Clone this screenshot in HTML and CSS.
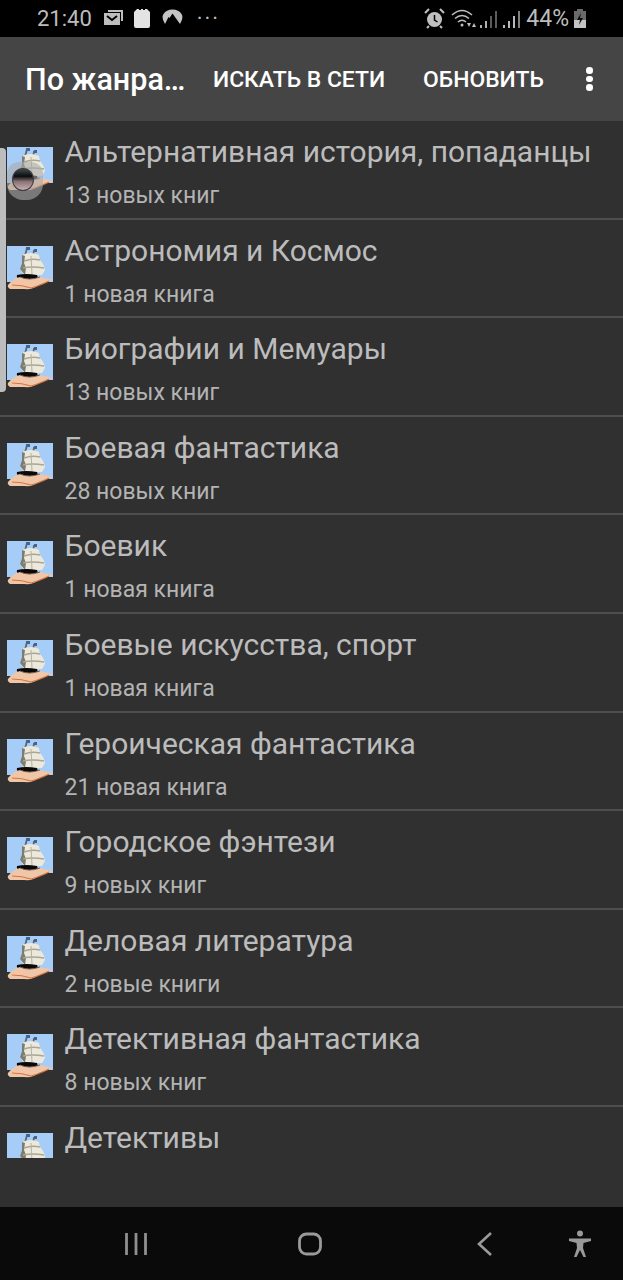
FILE: index.html
```html
<!DOCTYPE html>
<html lang="ru">
<head>
<meta charset="utf-8">
<title>По жанрам</title>
<link rel="stylesheet" href="styles.css">
</head>
<body>
<svg class="defs" width="0" height="0">
  <symbol id="ship" viewBox="0 0 46 44">
    <rect x="0" y="0" width="46" height="36" fill="#a5cdf7"/>
    <path d="M20 2l-2 8M27 4l-1 8" stroke="#5b6672" stroke-width="1.800"/>
    <path d="M19 1h4v3h-4zM27 3h3v3h-3z" fill="#47658c"/>
    <path d="M15 9q9-4 17 0l1 5q4 4 5 10l-3 5H17l-4-6 2-6z" fill="#ece9dc"/>
    <path d="M15 9l3 1-1 7 2 5-1 7-5-6 2-6z" fill="#7d7c72"/>
    <path d="M17 15q8-3 16-1M16 22q9-2 21 0" fill="none" stroke="#a9a694" stroke-width="1.400"/>
    <path d="M24 10l1 18" fill="none" stroke="#b5b2a0" stroke-width="1"/>
    <path d="M10 29q9-2 20 0l1 3q-9 2-18 1q-4-1-3-4z" fill="#090909"/>
    <path d="M1 39q6-7 12-8q9 4 20 0l13 3-14 5q-6 5-15 4l-14 0q-3-2-2-4z" fill="#f0c6a8"/>
    <path d="M5 39q10 0 19 3q8-2 18-7" fill="none" stroke="#d9763f" stroke-width="1.200"/>
    <path d="M13 31q9 4 20 0" fill="none" stroke="#7c5a4a" stroke-width="1"/>
  </symbol>
</svg>
<div class="screen">
  <div class="status">
    <div class="status-left">
      <span class="clock">21:40</span>
      <svg class="ico ico-mail" width="19" height="16" viewBox="0 0 19 16"><path d="M4 0h15v11h-2V2H4z" fill="#bdbdbd"/><path d="M0 3h16v12H0z" fill="#bdbdbd"/><path d="M3 6l5 4 5-4" fill="none" stroke="#000" stroke-width="2"/></svg>
      <svg class="ico ico-clip" width="17" height="21" viewBox="0 0 17 21"><path d="M3 1h2v1h2V1h2v1h2V1h2l3 3v14q0 2-2 2H2q-2 0-2-2V4z" fill="#e3e3e3"/></svg>
      <svg class="ico ico-vpn" width="21" height="16" viewBox="0 0 21 16"><path d="M3 16Q-1 10 1.500 6A10 8 0 0 1 19.500 6Q22 10 18 16L10.500 5.500 7.500 10 6.500 9z" fill="#c4c4c4"/></svg>
      <span class="more-dots">···</span>
    </div>
    <div class="status-right">
      <svg class="ico ico-alarm" width="21" height="21" viewBox="0 0 21 21"><circle cx="10.500" cy="11.500" r="7.500" fill="#c0c0c0"/><path d="M10.500 7v5l3 2" fill="none" stroke="#000" stroke-width="1.500"/><path d="M1 5l4-4M20 5l-4-4M5 18l-2 2M16 18l2 2" stroke="#c0c0c0" stroke-width="2"/></svg>
      <svg class="ico ico-wifi" width="26" height="20" viewBox="0 0 26 20"><path d="M1 6q10-9 20 0M4 9.500q7-6 14 0M7 13q4-3.500 8 0" fill="none" stroke="#bdbdbd" stroke-width="1.600"/><path d="M16 14h4l-2 4zM21 18h4l-2-4z" fill="#bdbdbd"/><circle cx="11" cy="16" r="1.500" fill="#bdbdbd"/></svg>
      <svg class="ico ico-sig" width="20" height="20" viewBox="0 0 20 20"><path d="M1 16h2v3H1zM6 12h2v7H6z" fill="#b0b0b0"/><path d="M11 7h2v12h-2zM16 2h2v17h-2z" fill="#5c5c5c"/></svg>
      <svg class="ico ico-sig" width="20" height="20" viewBox="0 0 20 20"><path d="M1 16h2v3H1zM6 12h2v7H6zM11 7h2v12h-2z" fill="#b8b8b8"/><path d="M16 2h2v17h-2z" fill="#808080"/></svg>
      <span class="percent">44%</span>
      <svg class="ico" width="14" height="21" viewBox="0 0 14 21"><path d="M4 1h6v2h3v17H1V3h3z" fill="#6a6a6a"/><path d="M1 12h12v8H1z" fill="#c4c4c4"/><path d="M8 5l-4 7h3l-1 5 4-7H7z" fill="#0c0c0c"/></svg>
    </div>
  </div>
  <header class="appbar">
    <h1 class="title">По жанра…</h1>
    <span class="action action-search">ИСКАТЬ В СЕТИ</span>
    <span class="action action-refresh">ОБНОВИТЬ</span>
    <span class="overflow"><i></i><i></i><i></i></span>
  </header>
  <main class="list">
    <div class="row"><svg class="thumb"><use href="#ship"/></svg><div class="text"><div class="name">Альтернативная история, попаданцы</div><div class="count">13 новых книг</div></div></div>
    <div class="row"><svg class="thumb"><use href="#ship"/></svg><div class="text"><div class="name">Астрономия и Космос</div><div class="count">1 новая книга</div></div></div>
    <div class="row"><svg class="thumb"><use href="#ship"/></svg><div class="text"><div class="name">Биографии и Мемуары</div><div class="count">13 новых книг</div></div></div>
    <div class="row"><svg class="thumb"><use href="#ship"/></svg><div class="text"><div class="name">Боевая фантастика</div><div class="count">28 новых книг</div></div></div>
    <div class="row"><svg class="thumb"><use href="#ship"/></svg><div class="text"><div class="name">Боевик</div><div class="count">1 новая книга</div></div></div>
    <div class="row"><svg class="thumb"><use href="#ship"/></svg><div class="text"><div class="name">Боевые искусства, спорт</div><div class="count">1 новая книга</div></div></div>
    <div class="row"><svg class="thumb"><use href="#ship"/></svg><div class="text"><div class="name">Героическая фантастика</div><div class="count">21 новая книга</div></div></div>
    <div class="row"><svg class="thumb"><use href="#ship"/></svg><div class="text"><div class="name">Городское фэнтези</div><div class="count">9 новых книг</div></div></div>
    <div class="row"><svg class="thumb"><use href="#ship"/></svg><div class="text"><div class="name">Деловая литература</div><div class="count">2 новые книги</div></div></div>
    <div class="row"><svg class="thumb"><use href="#ship"/></svg><div class="text"><div class="name">Детективная фантастика</div><div class="count">8 новых книг</div></div></div>
    <div class="row row-last"><svg class="thumb thumb-cut" viewBox="0 0 46 25" preserveAspectRatio="xMidYMin slice"><use href="#ship" width="46" height="44"/></svg><div class="text"><div class="name">Детективы</div></div></div>
  </main>
  <nav class="navbar">
    <svg class="nav-recents" width="22" height="22" viewBox="0 0 22 22"><path d="M1.500 0v22M11 0v22M20.500 0v22" stroke="#8f8f8f" stroke-width="2.800"/></svg>
    <svg class="nav-home" width="26" height="26" viewBox="0 0 26 26"><rect x="2.500" y="3" width="21" height="20" rx="7" fill="none" stroke="#9a9a9a" stroke-width="2.800"/></svg>
    <svg class="nav-back" width="18" height="26" viewBox="0 0 18 26"><path d="M15 2L3 13l12 11" fill="none" stroke="#9a9a9a" stroke-width="2.600"/></svg>
    <svg class="nav-access" width="24" height="28" viewBox="0 0 24 28"><circle cx="12" cy="3.500" r="3" fill="#9a9a9a"/><path d="M1 8.500h22v2.500l-7.500 2-.5 5 3 9h-2.500L12 20l-3.500 7H6l3-9-.5-5L1 11z" fill="#9a9a9a"/></svg>
  </nav>
  <div class="edge-handle"></div>
  <div class="edge-bubble"></div>
  <div class="edge-lens"></div>
</div>
</body>
</html>
```

FILE: styles.css
```css
* { box-sizing: border-box; }
html, body { margin: 0; padding: 0; }
body { background: #000; font-family: Roboto, "Noto Sans", sans-serif; }
.defs { position: absolute; }
.screen { position: relative; width: 623px; height: 1280px; overflow: hidden; display: flex; flex-direction: column; background: #303030; }

.status { height: 37px; flex: none; background: #000; display: flex; justify-content: space-between; align-items: center; padding: 0 36px 0 37px; color: #bdbdbd; }
.status-left, .status-right { display: flex; align-items: center; }
.clock { font-size: 22px; margin-right: 12px; }
.ico { flex: none; display: block; }
.ico-mail { margin-top: -2px; margin-right: 11px; }
.ico-clip { margin-top: -1px; margin-right: 11px; }
.ico-vpn { margin-top: -6px; margin-right: 14px; }
.more-dots { font-size: 22px; letter-spacing: 2px; margin-top: -1px; }
.ico-alarm { margin-right: 6px; }
.ico-wifi { margin-right: 2px; }
.ico-sig { margin-right: 3px; }
.percent { font-size: 23px; margin: 0 4px 0 1px; }

.appbar { height: 84px; flex: none; background: #454545; display: flex; align-items: center; padding: 0 0 0 25px; color: #fff; }
.title { margin: 0; width: 188px; font-size: 30.500px; font-weight: 500; white-space: nowrap; }
.action { font-size: 22.900px; font-weight: 500; white-space: nowrap; }
.action-search { width: 210px; }
.action-refresh { width: 155px; }
.overflow { display: flex; flex-direction: column; gap: 2px; margin-left: 8px; }
.overflow i { display: block; width: 6.500px; height: 6.500px; border-radius: 50%; background: #fff; }

.list { flex: 1; min-height: 0; overflow: hidden; }
.row { height: 98.600px; display: flex; align-items: flex-start; padding: 0 0 0 7px; border-bottom: 2px solid #4e4e4e; }
.row-last { border-bottom: 0; }
.thumb { width: 46px; height: 44px; flex: none; margin-top: 26px; display: block; }
.thumb-cut { height: 25px; }
.text { margin-left: 11.500px; min-width: 0; }
.name { font-size: 30px; line-height: 34px; margin-top: 14px; color: #bcbcbc; white-space: nowrap; }
.count { font-size: 23px; line-height: 26px; margin-top: 14px; color: #b4b4b4; white-space: nowrap; }

.navbar { height: 73px; flex: none; background: #0a0a0a; display: flex; align-items: center; padding: 0 29px 0 125px; }
.nav-home { margin-left: 150px; }
.nav-back { margin-left: 153px; }
.nav-access { margin-left: 74px; }

.edge-handle { position: absolute; left: 0; top: 148px; width: 6px; height: 244px; background: #bdbdbd; border-radius: 0 4px 4px 0; }
.edge-bubble { position: absolute; left: 7px; top: 162px; width: 36px; height: 38px; border-radius: 12px 12px 16px 16px; background: rgba(170,170,170,0.6); }
.edge-lens { position: absolute; left: 12px; top: 168px; width: 22px; height: 23px; border-radius: 50%; border: 1px solid #3a3a40; background: linear-gradient(#3f4a50 0, #0c0c0c 35%, #8a7478 60%, #c9aeb2 100%); }
```
